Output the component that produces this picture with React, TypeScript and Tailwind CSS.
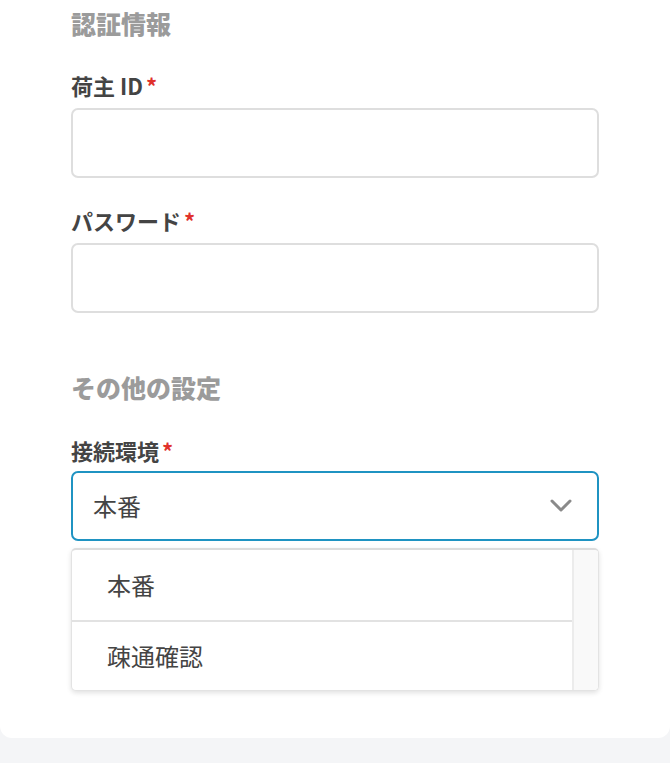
import React from 'react';

const Label = ({ text }: { text: string }) => (
  <div className="flex items-center text-[22px] leading-[32px] font-bold text-[#444444]">
    <span>{text}</span>
    <span className="ml-[3px] text-[#e0312b]">*</span>
  </div>
);

const TextInput = () => (
  <input
    type="text"
    className="block h-[70px] w-full rounded-[7px] border-2 border-[#dedede] bg-white px-5 outline-none"
  />
);

const OPTIONS = ['本番', '疎通確認'];

export default function App() {
  return (
    <div
      className="min-h-[763px] bg-[#f4f5f7]"
      style={{ fontFamily: '"Noto Sans CJK JP", "Noto Sans", sans-serif' }}
    >
      <div className="rounded-b-[12px] bg-white pl-[71px] pr-[71px] pt-[5px] pb-[47px]">
        {/* 認証情報 */}
        <h2 className="text-[25px] leading-[36px] font-black text-[#9b9b9b]">認証情報</h2>

        <div className="mt-[28px]">
          <Label text="荷主 ID" />
          <div className="mt-[7px]">
            <TextInput />
          </div>
        </div>

        <div className="mt-[26px]">
          <Label text="パスワード" />
          <div className="mt-[7px]">
            <TextInput />
          </div>
        </div>

        {/* その他の設定 */}
        <h2 className="mt-[56px] text-[25px] leading-[36px] font-black text-[#9b9b9b]">その他の設定</h2>

        <div className="mt-[29px]">
          <Label text="接続環境" />
          <div className="mt-[5px] flex h-[70px] w-full items-center justify-between rounded-[7px] border-2 border-[#1f93c2] bg-white pl-[20px] pr-[25px]">
            <span className="text-[24px] text-[#444444]">本番</span>
            <svg width="22" height="14" viewBox="0 0 22 14" fill="none">
              <polyline
                points="2,2 11,11 20,2"
                stroke="#8a8a8a"
                strokeWidth="3"
                strokeLinecap="round"
                strokeLinejoin="round"
              />
            </svg>
          </div>

          <div className="mt-[7px] flex overflow-hidden rounded-[5px] border border-[#e3e3e3] border-t-[2px] border-t-[#dcdcdc] bg-white shadow-[0_2px_5px_rgba(0,0,0,0.12)]">
            <div className="flex-1">
              {OPTIONS.map((o, i) => (
                <div
                  key={o}
                  className={
                    'flex h-[70px] items-center pl-[35px] text-[24px] text-[#444444] ' +
                    (i > 0 ? 'border-t-2 border-[#e2e2e2]' : '')
                  }
                >
                  {o}
                </div>
              ))}
            </div>
            <div className="w-[26px] border-l-2 border-[#ececec] bg-[#f9f9f9]" />
          </div>
        </div>
      </div>
    </div>
  );
}
